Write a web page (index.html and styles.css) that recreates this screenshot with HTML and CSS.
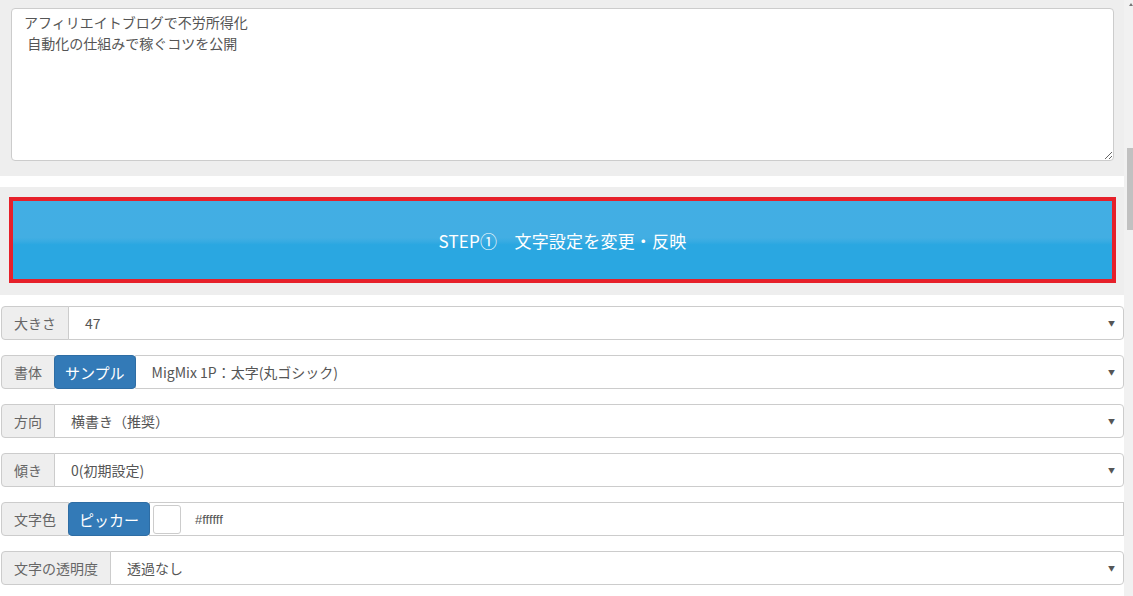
FILE: index.html
```html
<!DOCTYPE html>
<html>
  <head>
    <meta charset="utf-8" />
    <title>文字設定</title>
    <link rel="stylesheet" href="styles.css">
  </head>
  <body>
    <div class="page">
      <div class="main">
        <div class="panel panel-text">
          <textarea class="text-input" readonly>アフィリエイトブログで不労所得化
 自動化の仕組みで稼ぐコツを公開</textarea>
        </div>

        <div class="panel panel-step">
          <div class="step-frame">
            <div class="step-button">STEP①　文字設定を変更・反映</div>
          </div>
        </div>

        <div class="form">
          <div class="row">
            <span class="addon">大きさ</span>
            <div class="select"><span>47</span><span class="caret">&#9660;</span></div>
          </div>
          <div class="row">
            <span class="addon">書体</span>
            <span class="btn-blue">サンプル</span>
            <div class="select"><span>MigMix 1P：太字(丸ゴシック)</span><span class="caret">&#9660;</span></div>
          </div>
          <div class="row">
            <span class="addon">方向</span>
            <div class="select"><span>横書き（推奨）</span><span class="caret">&#9660;</span></div>
          </div>
          <div class="row">
            <span class="addon">傾き</span>
            <div class="select"><span>0(初期設定)</span><span class="caret">&#9660;</span></div>
          </div>
          <div class="row">
            <span class="addon">文字色</span>
            <span class="btn-blue">ピッカー</span>
            <div class="select color-field">
              <span class="swatch"></span>
              <span class="color-code">#ffffff</span>
            </div>
          </div>
          <div class="row">
            <span class="addon">文字の透明度</span>
            <div class="select"><span>透過なし</span><span class="caret">&#9660;</span></div>
          </div>
        </div>
      </div>

      <div class="scrollbar">
        <div class="scroll-arrow"></div>
        <div class="scroll-thumb"></div>
      </div>
    </div>
  </body>
</html>
```

FILE: styles.css
```css
html, body {
  margin: 0;
  padding: 0;
  background: #fff;
  overflow: hidden;
}
body {
  font-family: "Noto Sans CJK JP", "Noto Sans", sans-serif;
  font-size: 14px;
  color: #555;
}
.page {
  display: flex;
  flex-direction: row;
  height: 596px;
}
.main {
  width: 1124px;
}
.panel {
  background: #eeeeee;
}
.panel-text {
  padding: 8px 10px 15px 11px;
}
.text-input {
  display: block;
  box-sizing: border-box;
  width: 1103px;
  height: 153px;
  margin: 0;
  padding: 3px 12px;
  border: 1px solid #ccc;
  border-radius: 4px;
  background: #fff;
  font-family: "Noto Sans CJK JP", sans-serif;
  font-size: 14px;
  line-height: 21px;
  color: #555;
  resize: vertical;
  outline: none;
}
.panel-step {
  margin-top: 11px;
  padding: 10px 8px 12px 9px;
}
.step-frame {
  border: 4px solid #e6202a;
}
.step-button {
  height: 78px;
  display: flex;
  align-items: center;
  justify-content: center;
  background: linear-gradient(#42aee4 0%, #42aee3 47%, #37abe2 52%, #2aa7e1 56%, #2aa7e1 100%);
  color: #fff;
  font-size: 17px;
  letter-spacing: 0.2px;
}
.form {
  padding: 11px 0 0 1px;
}
.row {
  display: flex;
  height: 34px;
  margin-bottom: 15px;
}
.addon {
  box-sizing: border-box;
  display: flex;
  align-items: center;
  padding: 0 12px;
  background: #eee;
  border: 1px solid #ccc;
  border-radius: 4px 0 0 4px;
  white-space: nowrap;
  color: #666;
}
.btn-blue {
  display: flex;
  align-items: center;
  padding: 0 10px;
  margin-left: -1px;
  background: #337ab7;
  border: 1px solid #2e6da4;
  border-radius: 4px;
  color: #fff;
  font-size: 15px;
  white-space: nowrap;
  position: relative;
}
.select {
  box-sizing: border-box;
  flex: 1;
  display: flex;
  align-items: center;
  justify-content: space-between;
  padding: 0 8px 0 16px;
  margin-left: -1px;
  background: #fff;
  border: 1px solid #ccc;
  border-radius: 0 4px 4px 0;
  color: #555;
}
.caret {
  font-size: 7px;
  color: #555;
}
.color-field {
  justify-content: flex-start;
  padding-left: 3px;
  border-radius: 0;
}
.swatch {
  box-sizing: border-box;
  width: 28px;
  height: 29px;
  border: 1px solid #ccc;
  border-radius: 3px;
  background: #fff;
  margin-right: 14px;
}
.color-code {
  font-size: 13px;
  font-family: "Liberation Sans", sans-serif;
}
.scrollbar {
  width: 9px;
  background: #f1f1f1;
}
.scroll-arrow {
  width: 0;
  height: 0;
  margin: 3px 0 0 5px;
  border-left: 2px solid transparent;
  border-right: 2px solid transparent;
  border-bottom: 3px solid #777;
}
.scroll-thumb {
  width: 6px;
  height: 82px;
  margin: 142px 0 0 3px;
  background: #c1c1c1;
}
```
